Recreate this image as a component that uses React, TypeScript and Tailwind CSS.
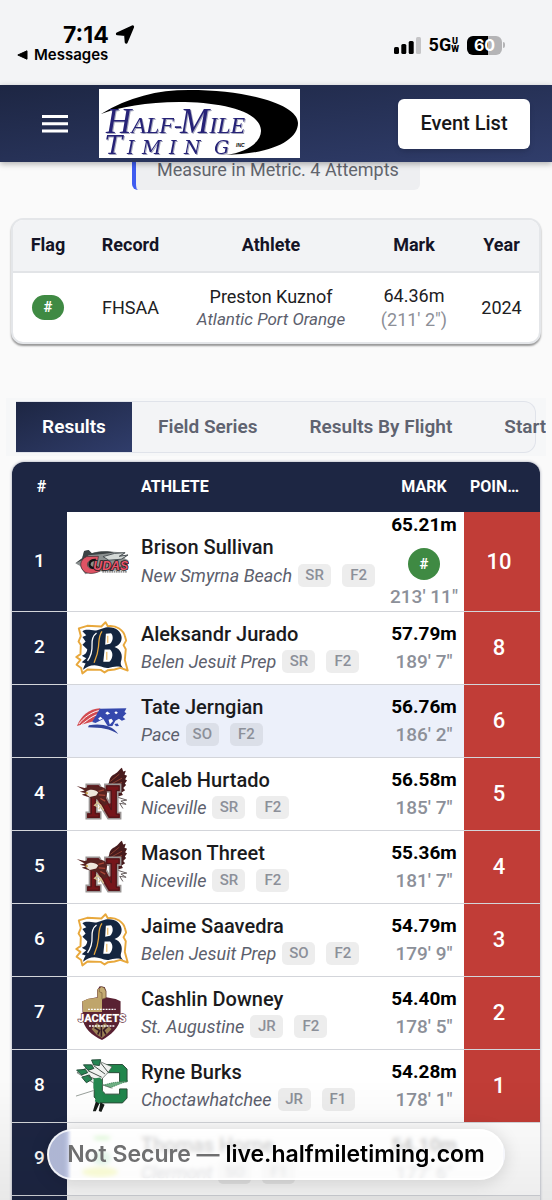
import React from "react";

type Result = {
  place: number;
  name: string;
  school: string;
  grade: string;
  flight: string;
  mark: string;
  imperial: string;
  points?: number;
  record?: boolean;
  highlighted?: boolean;
  Logo: () => React.ReactElement;
};

function BarracudaLogo() {
  return (
    <svg viewBox="24 82 166 80" className="h-[27px] w-[54px]" role="img" aria-label="New Smyrna Beach">
      <path d="M25 127 L46 112 L52 90 L66 87 L74 97 C98 88 125 88 142 92 L178 94 L170 103 L187 101 L176 112 L188 118 L186 148 L70 154 L56 161 L44 145 L40 136 L33 132 Z" fill="#8b9090" />
      <path d="M25 127 L46 112 L52 90 L66 87 L76 97 C96 90 124 90 144 94 L110 99 L66 103 L46 118 Z" fill="#3c4244" />
      <path d="M110 107 L146 97 L178 95 L160 106 L187 102 L166 115 L128 118 Z" fill="#d3d8d6" stroke="#4a5054" strokeWidth="3" />
      <path d="M96 106 L60 107 C38 116 35 140 55 155 C70 162 90 158 101 151 L94 137 C82 145 69 146 64 137 C57 123 72 114 94 119 Z" fill="#df5364" stroke="#35272b" strokeWidth="2" />
      <path d="M88 117 C66 116 62 138 79 142 L92 137" fill="none" stroke="#111" strokeWidth="7" />
      <text x="80" y="147" fontFamily="Liberation Sans" fontSize="38" fontWeight="700" fontStyle="italic" fill="#e8546a" stroke="#22191d" strokeWidth="5" paintOrder="stroke">UDAS</text>
      <path d="M108 154 H184" stroke="#666" strokeWidth="4" strokeDasharray="5 2" />
    </svg>
  );
}

function BelenLogo() {
  return (
    <svg viewBox="24 30 166 168" className="h-[54px] w-[54px]" role="img" aria-label="Belen Jesuit Prep">
      <path d="M35 53 L61 45 L105 47 L118 34 L125 46 C151 42 175 58 179 80 L182 91 L174 105 L181 118 L178 151 L187 184 L164 176 L146 181 L126 183 L115 190 L103 182 L62 181 L46 193 L42 176 L28 166 L40 151 L27 142 L40 133 L41 105 L34 94 L41 77 Z" fill="#fff" stroke="#e8a83c" strokeWidth="6" strokeLinejoin="round" />
      <path d="M46 62 C60 52 76 62 92 59 L118 50 C146 46 166 60 168 80 C169 96 160 106 146 111 C166 118 173 137 166 156 C163 168 170 173 174 177 C156 168 142 173 127 176 C112 178 100 168 84 168 C70 168 58 174 48 182 C50 174 52 168 56 162 L44 158 L58 146 L44 138 C56 134 60 128 61 118 L46 104 L56 94 L46 80 L58 74 Z" fill="#14253f" />
      <path d="M90 67 C78 76 75 88 76 104 C77 124 72 140 62 154" fill="none" stroke="#fff" strokeWidth="4" />
      <path d="M107 62 C96 76 98 92 96 110 C94 134 88 146 82 160" fill="none" stroke="#e8a83c" strokeWidth="4" />
      <path d="M119 70 L135 68 C143 76 142 92 132 101 L117 104 Z M115 119 L132 119 C143 128 141 148 130 157 L111 157 Z" fill="#fff" />
      <path d="M125 76 V98 M122 126 V151" stroke="#e8a83c" strokeWidth="3" />
    </svg>
  );
}

function PatriotLogo() {
  return (
    <svg viewBox="28 288 160 86" className="h-[28px] w-[54px]" role="img" aria-label="Pace">
      <path d="M31 346 C44 315 67 294 103 292 L82 332 Z" fill="#d24b50" />
      <path d="M101 293 L183 292 L177 303 L183 307 L172 319 L180 326 L169 330 L160 324 L149 330 L140 346 L126 347 L112 325 L88 337 L78 334 Z" fill="#3548ad" />
      <path d="M68 344 C105 338 140 344 158 371 C132 354 105 351 65 350 Z" fill="#33459e" />
      <path d="M37 340 C54 319 72 306 98 299 M43 344 C60 331 72 320 91 312" stroke="#fff" strokeWidth="3" fill="none" />
      <path d="M124 302 L133 308 L124 312 L118 307 Z M151 301 L157 306 L151 310 L146 305 Z M103 318 L110 323 L101 328 L96 324 Z M128 327 L137 324 L142 331 L132 342 Z" fill="#fff" />
      <path d="M146 340 L156 339 L160 346 L151 347 Z" fill="#3548ad" />
    </svg>
  );
}

function EagleLogo() {
  return (
    <svg viewBox="24 34 164 168" className="h-[54px] w-[54px]" role="img" aria-label="Niceville">
      <path d="M121 91 C134 82 123 72 140 59 C155 52 158 43 168 36 L172 48 L180 46 L176 58 L184 61 L178 72 L184 76 L177 85 L181 90 L172 99 L178 106 L167 113 L171 121 L149 128 Z" fill="#471b1d" />
      <path d="M132 79 L160 56 M135 87 L168 69 M141 93 L168 82" stroke="#8d3f30" strokeWidth="3" />
      <path d="M151 127 L183 137 L165 140 L181 150 L161 147 L171 163" fill="none" stroke="#63595a" strokeWidth="3" />
      <path d="M57 88 H98 L130 147 V112 H115 V88 H164 V112 H155 V176 H164 V195 H125 L90 137 V174 H102 V195 H57 V175 H67 V111 H57 Z" fill="#6f151c" stroke="#999493" strokeWidth="5" />
      <path d="M62 93 H95 L135 168 V107 H121 V93 H159 V107 H150 V181 H159 V190 H129 L85 115 V180 H97 V190 H62 V180 H73 V107 H62 Z" fill="#76151a" stroke="#4b181a" strokeWidth="3" />
      <path d="M27 93 L52 99 L75 93 L106 96 C124 100 126 120 115 135 L125 148 L112 155 L97 137 L78 131 L58 126 L43 120 L56 116 L37 111 L52 107 Z" fill="#572321" />
      <path d="M57 110 C66 102 86 103 94 113 L88 123 L68 127 L58 120 Z" fill="#eee7dc" />
      <path d="M62 116 L55 114" stroke="#c29c40" strokeWidth="5" fill="none" />
      <path d="M95 110 L112 105 M96 121 L116 122 M101 132 L116 140" stroke="#a74536" strokeWidth="4" />
      <path d="M88 141 L102 153 L111 169 M94 143 L83 153 L94 158 M103 154 L96 166" stroke="#d8c594" strokeWidth="4" fill="none" />
    </svg>
  );
}

function JacketsLogo() {
  return (
    <svg viewBox="34 38 146 172" className="h-[56px] w-[54px]" role="img" aria-label="St. Augustine">
      <path d="M46 89 L63 81 L92 76 V53 L100 42 L115 44 L120 56 V76 L149 81 L164 88 V137 C161 171 132 193 107 207 C77 193 48 171 48 137 Z" fill="#592132" />
      <path d="M46 89 L65 80 L93 77 V51 L107 43 V121 H49 Z" fill="#bfa56b" />
      <path d="M99 59 V49 L106 43 L114 47 L119 57 V77 L107 82 V62 Z" fill="#c5ad74" stroke="#775d3d" strokeWidth="2" />
      <path d="M75 173 L91 155 L104 164 L117 155 L136 173 L123 188 L107 201 L90 190 Z" fill="#9b8155" />
      <path d="M84 169 L99 178 L94 190 M126 164 L112 177 L119 190 M105 157 V197" stroke="#341724" strokeWidth="5" fill="none" />
      <text x="107" y="152" textAnchor="middle" fontFamily="Roboto" fontSize="34" fontWeight="900" fill="#fff" stroke="#65303b" strokeWidth="4" paintOrder="stroke">JACKETS</text>
      <path d="M64 113 H149 M67 164 H145" stroke="#fff" strokeWidth="4" strokeDasharray="6 3" />
    </svg>
  );
}

function ChoctawLogo() {
  return (
    <svg viewBox="26 260 164 166" className="h-[54px] w-[54px]" role="img" aria-label="Choctawhatchee">
      <path d="M103 277 H171 L185 291 V330 H162 V302 H118 L109 311 V358 L119 368 H162 V352 H185 V380 L171 395 H101 L84 377 V296 Z" fill="#21864c" stroke="#2a4937" strokeWidth="3" />
      <path d="M75 280 L104 269 L139 284 L127 301 L91 339 L53 316 L31 302 Z" fill="#f0f2f0" stroke="#465049" strokeWidth="2" />
      <path d="M76 263 L104 262 L100 280 L82 278 Z M51 278 L76 278 L83 289 L65 295 Z M30 294 L57 292 L64 302 L45 309 Z M46 316 L69 309 L77 323 L60 333 Z" fill="#268553" stroke="#234c38" strokeWidth="3" />
      <path d="M83 281 L117 306 M104 272 L126 300 M65 296 L107 316 M66 314 L100 326" stroke="#444d47" strokeWidth="3" />
      <path d="M82 320 L103 317 L109 333 L107 350 L112 388 L99 398 L86 390 L92 366 L82 350 Z" fill="#258750" />
      <path d="M112 340 L140 333 L188 327 L160 338 L134 348 Z" fill="#6fb084" stroke="#286d43" strokeWidth="2" strokeDasharray="4 2" />
      <path d="M28 374 L82 357 M108 339 L140 350" stroke="#626c65" strokeWidth="2" />
      <path d="M89 391 L100 397 L89 421 H80 Z M103 393 L116 401 L106 423 L98 420 Z" fill="#161b18" />
    </svg>
  );
}

function TornadoLogo() {
  return (
    <svg viewBox="0 0 54 54" className="h-[54px] w-[54px]" role="img" aria-label="Clermont">
      <ellipse cx="27" cy="6" rx="9" ry="2" fill="#5fdc38" />
      <ellipse cx="27" cy="26" rx="9" ry="7" fill="#81d49a" />
      <ellipse cx="25" cy="40" rx="18" ry="5" fill="#e2ef27" />
    </svg>
  );
}

const results: Result[] = [
  { place: 1, name: "Brison Sullivan", school: "New Smyrna Beach", grade: "SR", flight: "F2", mark: "65.21m", imperial: "213' 11\"", points: 10, record: true, Logo: BarracudaLogo },
  { place: 2, name: "Aleksandr Jurado", school: "Belen Jesuit Prep", grade: "SR", flight: "F2", mark: "57.79m", imperial: "189' 7\"", points: 8, Logo: BelenLogo },
  { place: 3, name: "Tate Jerngian", school: "Pace", grade: "SO", flight: "F2", mark: "56.76m", imperial: "186' 2\"", points: 6, highlighted: true, Logo: PatriotLogo },
  { place: 4, name: "Caleb Hurtado", school: "Niceville", grade: "SR", flight: "F2", mark: "56.58m", imperial: "185' 7\"", points: 5, Logo: EagleLogo },
  { place: 5, name: "Mason Threet", school: "Niceville", grade: "SR", flight: "F2", mark: "55.36m", imperial: "181' 7\"", points: 4, Logo: EagleLogo },
  { place: 6, name: "Jaime Saavedra", school: "Belen Jesuit Prep", grade: "SO", flight: "F2", mark: "54.79m", imperial: "179' 9\"", points: 3, Logo: BelenLogo },
  { place: 7, name: "Cashlin Downey", school: "St. Augustine", grade: "JR", flight: "F2", mark: "54.40m", imperial: "178' 5\"", points: 2, Logo: JacketsLogo },
  { place: 8, name: "Ryne Burks", school: "Choctawhatchee", grade: "JR", flight: "F1", mark: "54.28m", imperial: "178' 1\"", points: 1, Logo: ChoctawLogo },
  { place: 9, name: "Thomas Horne", school: "Clermont", grade: "SO", flight: "F1", mark: "54.10m", imperial: "177' 6\"", Logo: TornadoLogo },
];

function StatusBar() {
  return (
    <div className="flex h-[85px] items-start justify-between bg-[#f3f4f6] pr-[47px] pl-[17px] font-[Inter,sans-serif] text-black">
      <div className="pt-[22px]">
        <div className="flex items-center gap-1.5 pl-[46px] text-[23px] leading-[26px] font-bold">
          <span>7:14</span>
          <svg viewBox="0 0 20 20" className="h-5 w-5" aria-hidden="true">
            <path d="M17.6 1.8 L11.2 17.2 L10.6 9.4 L2.4 8.8 Z" fill="#000" stroke="#000" strokeWidth="3" strokeLinejoin="round" />
          </svg>
        </div>
        <a href="#messages" className="flex items-center gap-1.5 text-[15px] leading-[14px] font-semibold">
          <svg viewBox="0 0 11 10" className="h-2.5 w-[11px]" aria-hidden="true"><path d="M10 .8 V9.2 L.8 5 Z" stroke="#000" strokeLinejoin="round" /></svg>
          Messages
        </a>
      </div>
      <div className="flex items-center pt-[35px]">
        <svg viewBox="0 0 27 18" className="h-[18px] w-[27px]" aria-label="Signal strength">
          <rect x="0" y="11" width="5" height="7" rx="1.5" />
          <rect x="7.3" y="8" width="5" height="10" rx="1.5" />
          <rect x="14.7" y="5" width="5" height="13" rx="1.5" />
          <rect x="22" y="1" width="5" height="17" rx="1.5" fill="#c5c5c7" />
        </svg>
        <span className="ml-2 font-[Roboto,sans-serif] text-[18px] leading-5 font-bold">5G</span>
        <span className="flex flex-col text-center font-[Roboto,sans-serif] text-[9px] leading-[8px] font-black"><span>U</span><span>W</span></span>
        <div className="ml-2 flex h-[19px] w-[35px] items-center justify-center rounded-md bg-linear-to-r from-black from-60% to-[#b4b4b6] to-60% text-[16px] font-bold text-white">60</div>
        <div className="ml-px h-1.5 w-0.5 rounded-r bg-[#b4b4b6]" />
      </div>
    </div>
  );
}

function HalfMileLogo() {
  return (
    <svg viewBox="0 0 201 69" className="h-[69px] w-[201px] bg-white" role="img" aria-label="Half-Mile Timing Inc">
      <path d="M2 25 C30 8 58 1 90 1 C151 1 199 16 199 34 C199 51 174 65 126 66 C150 63 162 52 162 42 C162 22 122 13 80 13 C48 13 20 18 2 25 Z" />
      <g className="drop-shadow-[1px_1px_0_#a5a7bd]" fill="#262277" fontFamily="Liberation Serif, serif" fontStyle="italic">
        <text x="7" y="44" fontSize="35">H<tspan fontSize="24">ALF-</tspan></text>
        <text x="81" y="44" fontSize="35">M<tspan fontSize="24">ILE</tspan></text>
        <g fontFamily="DejaVu Serif, serif">
          <text x="6" y="65" fontSize="26">T</text>
          <text x="28" y="65" fontSize="19">I</text>
          <text x="43" y="65" fontSize="19">M</text>
          <text x="70" y="65" fontSize="19">I</text>
          <text x="85" y="65" fontSize="19">N</text>
          <text x="115" y="65" fontSize="19">G</text>
        </g>
      </g>
      <text x="137" y="58" fontFamily="Liberation Sans" fontStyle="italic" fontWeight="700" fontSize="5">INC</text>
    </svg>
  );
}

function AppHeader() {
  return (
    <header className="relative z-10 flex h-[77px] items-center bg-linear-to-br from-[#1d2643] to-[#303d6b] pr-[22px] pl-[41px] shadow-[0_2px_6px_rgba(0,0,0,0.3)]">
      <button type="button" aria-label="Open menu" className="flex h-10 w-7 items-center justify-center">
        <svg viewBox="0 0 26 18" className="h-[18px] w-[26px]" aria-hidden="true"><path d="M0 1.5 H26 M0 8.8 H26 M0 16 H26" stroke="#fff" strokeWidth="3" /></svg>
      </button>
      <a href="#home" className="ml-[30px]"><HalfMileLogo /></a>
      <button type="button" className="ml-auto h-[50px] w-[132px] rounded-md bg-white pb-0.5 text-[20px] font-medium text-[#171719] shadow-md">Event List</button>
    </header>
  );
}

function RecordTable() {
  const heading = "p-0 pb-0.5 text-[18px] font-bold";
  return (
    <div className="mx-[11px] mt-7 overflow-hidden rounded-xl border-2 border-[#e4e6e9] bg-white shadow-[0_2px_2px_rgba(0,0,0,0.4)]">
      <table className="w-full table-fixed border-collapse text-center text-[18px] leading-6 text-[#202022]">
        <thead className="bg-[#f2f3f5] text-[#141426]">
          <tr className="h-[52px] border-b-2 border-[#e2e4e7]">
            <th className={`w-[70px] ${heading}`}>Flag</th>
            <th className={`w-[95px] ${heading}`}>Record</th>
            <th className={heading}>Athlete</th>
            <th className={`w-[100px] ${heading}`}>Mark</th>
            <th className={`w-[75px] ${heading}`}>Year</th>
          </tr>
        </thead>
        <tbody>
          <tr className="h-[70px]">
            <td><span className="inline-block h-[25px] w-8 rounded-full bg-[#3f8a43] align-middle text-[15px] leading-[25px] font-bold text-white">#</span></td>
            <td>FHSAA</td>
            <td><div className="leading-[22px]">Preston Kuznof</div><div className="text-[17px] leading-[22px] text-[#5c606d] italic">Atlantic Port Orange</div></td>
            <td>64.36m<br /><span className="text-[#8c8f97]">(211' 2")</span></td>
            <td>2024</td>
          </tr>
        </tbody>
      </table>
    </div>
  );
}

function ResultTabs() {
  const tab = "h-full shrink-0 whitespace-nowrap px-[26px] text-[19px] font-semibold";
  return (
    <div className="mx-1.5 mt-[54px] overflow-hidden bg-[#f6f7f8] px-2.5 py-[3px]">
      <div role="tablist" className="flex h-[52px] rounded-r-xl border border-l-0 border-[#e0e3ea] bg-[#f3f4f6] text-[#5f6370]">
        <button role="tab" aria-selected="true" className="h-full w-[116px] shrink-0 bg-linear-to-br from-[#1d2643] to-[#303d6b] text-[19px] font-semibold text-white">Results</button>
        <button role="tab" aria-selected="false" className={tab}>Field Series</button>
        <button role="tab" aria-selected="false" className={tab}>Results By Flight</button>
        <button role="tab" aria-selected="false" className={tab}>Start List</button>
      </div>
    </div>
  );
}

function Tag({ children }: { children: React.ReactNode }) {
  return <span className="flex h-[23px] w-[33px] items-center justify-center rounded-[5px] bg-black/7 text-[15px] font-medium text-[#8c9099] not-italic">{children}</span>;
}

function ResultRow({ result }: { result: Result }) {
  const { Logo } = result;
  return (
    <tr className={`border-b border-[#d3d5da] ${result.record ? "h-[99px]" : "h-[73px]"} ${result.highlighted ? "bg-[#ecf0fa]" : "bg-white"}`}>
      <td className="bg-[#1d2643] p-0 text-center text-[19px] font-medium text-white">{result.place}</td>
      <td className="p-0 pl-2"><Logo /></td>
      <td className="p-0">
        <div className="text-[20px] leading-7 text-[#1b1b1d] font-medium">{result.name}</div>
        <div className="flex h-7 items-center text-[18px] whitespace-nowrap text-[#5c606d] italic">
          <span className="mr-1.5">{result.school}</span>
          <Tag>{result.grade}</Tag>
          <span className="w-[11px]" />
          <Tag>{result.flight}</Tag>
        </div>
      </td>
      <td className="p-0 text-center text-[19px] whitespace-nowrap">
        <div className={`font-bold text-black ${result.record ? "leading-[26px]" : "leading-7"}`}>{result.mark}</div>
        {result.record && <div className="mx-auto mt-2.5 mb-1 flex h-8 w-8 items-center justify-center rounded-full bg-[#3f8a43] text-[15px] font-bold text-white">#</div>}
        <div className={`font-medium text-[#8c9099] ${result.record ? "leading-[26px]" : "leading-7"}`}>{result.imperial}</div>
      </td>
      <td className={`p-0 pr-1.5 text-center text-[22px] font-medium text-white ${result.points ? "bg-[#c13d37]" : ""}`}>{result.points}</td>
    </tr>
  );
}

function ResultsTable() {
  const heading = "p-0 text-[16px] font-bold";
  return (
    <div className="mx-3 mt-1.5 overflow-hidden rounded-t-xl shadow-[0_0_3px_rgba(30,40,80,0.45)]">
      <table className="w-full table-fixed border-collapse">
        <thead>
          <tr className="h-[50px] bg-[#1d2643] text-white">
            <th className={`w-[55px] pl-1 text-center ${heading}`}>#</th>
            <th className={`w-[74px] ${heading}`} aria-label="Team logo" />
            <th className={`text-left ${heading}`}>ATHLETE</th>
            <th className={`w-20 text-center ${heading}`}>MARK</th>
            <th className={`w-[76px] text-left ${heading}`}><span className="pl-1.5">POIN…</span></th>
          </tr>
        </thead>
        <tbody>
          {results.map((result) => <ResultRow key={result.place} result={result} />)}
          <tr className="h-[73px] bg-[#f1f1f1]"><td className="bg-[#1d2643]" /><td colSpan={4} /></tr>
        </tbody>
      </table>
    </div>
  );
}

function AddressPill() {
  return (
    <div className="fixed inset-x-0 bottom-0 z-20 flex h-[120px] justify-center bg-linear-to-b from-transparent to-black/7 pt-[49px]">
      <div className="flex h-[51px] w-[458px] items-center justify-center rounded-full border-2 border-white/80 bg-linear-to-r from-[#c8d0ee]/85 from-4% to-white/80 to-5% font-[Inter,sans-serif] text-[23px] whitespace-nowrap shadow-[0_2px_18px_rgba(0,0,0,0.15)] backdrop-blur-[2px]">
        <span className="font-semibold text-[#6f6f70]">Not Secure —&nbsp;</span>
        <span className="font-semibold text-black">live.halfmiletiming.com</span>
      </div>
    </div>
  );
}

export default function App() {
  return (
    <div className="h-screen overflow-hidden bg-[#fafafa] font-[Roboto,sans-serif]">
      <StatusBar />
      <AppHeader />
      <main>
        <div className="mx-auto -mt-[13px] flex h-[41px] w-fit items-center rounded-md border-l-4 border-[#3f5cf0] bg-[#eeeff1] px-[21px] text-[18px] text-[#62656d]">Measure in Metric. 4 Attempts</div>
        <RecordTable />
        <ResultTabs />
        <ResultsTable />
      </main>
      <AddressPill />
    </div>
  );
}
